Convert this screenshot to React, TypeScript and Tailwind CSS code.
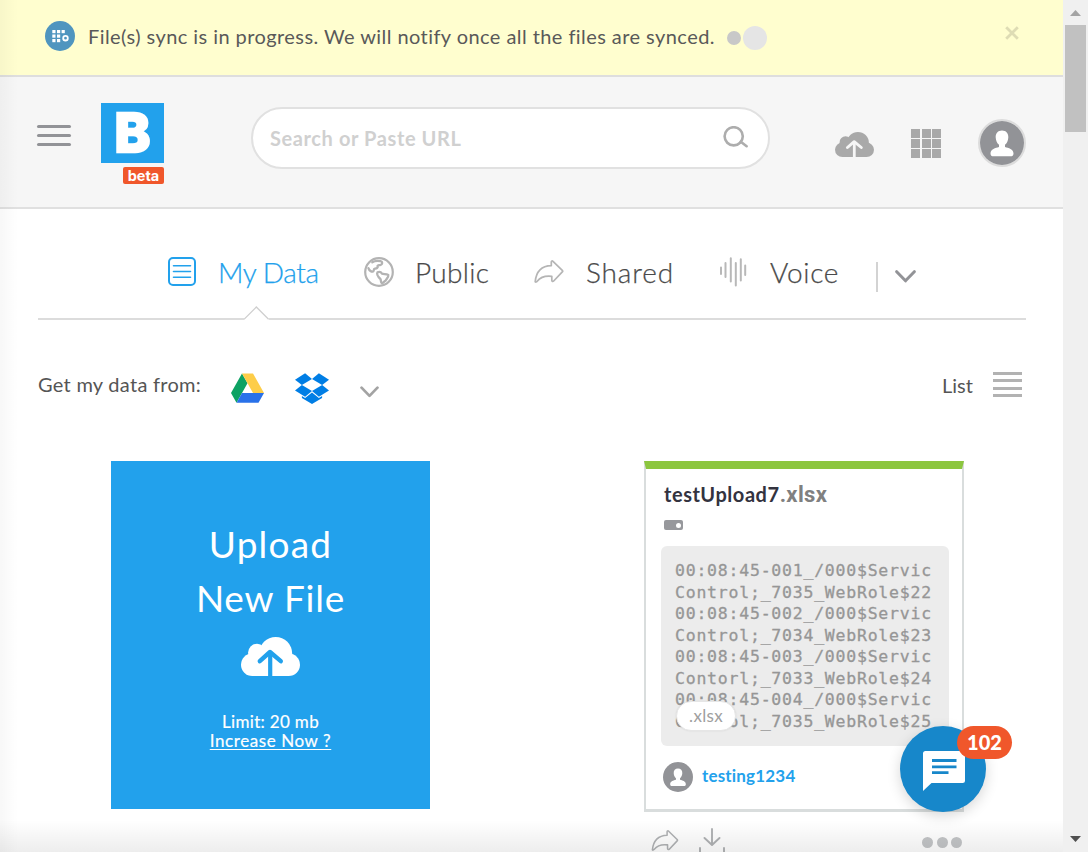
import type { ReactNode } from "react";

const previewLines = [
  "00:08:45-001_/000$Servic",
  "Control;_7035_WebRole$22",
  "00:08:45-002_/000$Servic",
  "Control;_7034_WebRole$23",
  "00:08:45-003_/000$Servic",
  "Contorl;_7033_WebRole$24",
  "00:08:45-004_/000$Servic",
  "Control;_7035_WebRole$25",
];

function CloudUpload({ className, arrow }: { className: string; arrow: string }) {
  return (
    <svg viewBox="0 0 59 39" preserveAspectRatio="none" className={className} fill="currentColor">
      <circle cx="34.7" cy="16.5" r="16.5" />
      <circle cx="16" cy="15.8" r="9" />
      <circle cx="11.3" cy="27.7" r="11.3" />
      <circle cx="47.7" cy="27.7" r="11.3" />
      <rect x="11" y="16" width="37" height="23" />
      <path d="M18.8 24.2 L29 15 L39.8 24.2" fill="none" stroke={arrow} strokeWidth="4.4" strokeLinecap="round" strokeLinejoin="round" />
      <path d="M29.2 15.5 V39" fill="none" stroke={arrow} strokeWidth="4.2" />
    </svg>
  );
}

function Person({ className }: { className: string }) {
  return (
    <svg viewBox="0 0 44 44" className={className}>
      <circle cx="22" cy="22" r="22" fill="#929397" />
      <path
        d="M22 9.5c-4 0-6.6 2.8-6.3 7 .2 3 1.3 5.7 3.3 7.300v2.2c-3.5 1-8.5 2.200-8.500 6.500 0 2 1.200 2.800 3 2.800h17c1.800 0 3-.8 3-2.800 0-4.300-5-5.500-8.500-6.500v-2.200c2-1.600 3.100-4.300 3.300-7.300.3-4.200-2.300-7-6.300-7z"
        fill="#fff"
      />
    </svg>
  );
}

function ShareArrow({ className }: { className: string }) {
  return (
    <svg viewBox="0 0 30 23" className={className} fill="none" stroke="currentColor" strokeWidth="1.700" strokeLinejoin="round">
      <path d="M1.200 21.700C2.200 11.500 8 6 17.300 5.700V1.900c0-1 .9-1.300 1.700-.6l9.300 9.100c.5.500.5 1 0 1.500L19.700 21c-.8.800-1.900.5-1.900-.7v-4C11 15.500 6.500 17 3.200 21.200c-.6.700-1.900 1.200-2 .5z" />
    </svg>
  );
}

function Chevron({ className }: { className: string }) {
  return (
    <svg viewBox="0 0 21 13" className={className} fill="none" stroke="currentColor" strokeWidth="3" strokeLinecap="round" strokeLinejoin="round">
      <path d="M1.700 1.700 L10.500 10.800 L19.300 1.700" />
    </svg>
  );
}

function Tab({ icon, children, className }: { icon: ReactNode; children: ReactNode; className: string }) {
  return (
    <div className={`flex h-[30px] items-start text-[28px] font-light [-webkit-text-stroke:0.25px_currentColor] ${className}`}>
      {icon}
      <span className="block leading-[30px] whitespace-nowrap">{children}</span>
    </div>
  );
}

function Banner() {
  return (
    <div className="flex h-[77px] items-start border-b-2 border-[#dedede] bg-[#fffecf] pl-[45px]">
      <svg viewBox="0 0 30 30" className="mt-[21px] h-[30px] w-[30px] shrink-0">
        <circle cx="15" cy="15" r="15" fill="#4f95bf" />
        <g fill="#fff">
          <rect x="7.300" y="9" width="3.200" height="3.200" />
          <rect x="12" y="9" width="3.200" height="3.200" />
          <rect x="16.600" y="9" width="3.200" height="3.200" />
          <rect x="7.300" y="13.500" width="3.200" height="3.200" />
          <rect x="12" y="13.500" width="3.200" height="3.200" />
          <rect x="7.300" y="18" width="3.200" height="3.200" />
          <rect x="12" y="18" width="3.200" height="3.200" />
        </g>
        <circle cx="20.500" cy="17.200" r="2.300" fill="none" stroke="#fff" strokeWidth="1.800" />
      </svg>
      <p className="mt-[21px] ml-[13px] w-[638px] shrink-0 text-[20px] leading-[30px] tracking-[0.435px] whitespace-nowrap text-[#595959]">
        File(s) sync is in progress. We will notify once all the files are synced.
      </p>
      <div className="mt-[26px] ml-px flex items-center">
        <span className="block size-[14px] rounded-full bg-[#c8c8c8]" />
        <span className="ml-[2px] block size-6 rounded-full bg-[#e5e5e5]" />
      </div>
      <svg viewBox="0 0 14 14" className="mt-[26px] ml-[238px] size-[14px] shrink-0" stroke="#dedcb4" strokeWidth="2.800">
        <path d="M1.200 1.200 L12.800 12.800 M12.800 1.200 L1.200 12.800" />
      </svg>
    </div>
  );
}

function Header() {
  return (
    <header className="flex h-[132px] items-start border-b-2 border-[#e0e0e0] bg-[#f6f6f6] pl-[37px]">
      <div className="mt-12 flex w-[34px] shrink-0 flex-col gap-[6px]">
        <span className="h-[3px] rounded-full bg-[#929397]" />
        <span className="h-[3px] rounded-full bg-[#929397]" />
        <span className="h-[3px] rounded-full bg-[#929397]" />
      </div>
      <div className="mt-[26px] ml-[30px] flex w-[63px] shrink-0 flex-col items-end">
        <div className="flex h-[60px] w-[63px] items-center justify-center bg-[#22a1ec] font-['Inter',sans-serif] text-[54px] leading-[60px] font-extrabold text-white [-webkit-text-stroke:2.500px_#fff]">
          B
        </div>
        <div className="mt-1 flex h-[17px] w-[41px] items-center justify-center rounded-[2px] bg-[#f0572b] font-['Inter',sans-serif] text-[14.500px] leading-[17px] font-bold text-white">
          beta
        </div>
      </div>
      <div className="mt-[30px] ml-[87px] flex h-[62px] w-[519px] shrink-0 items-center rounded-full border-2 border-[#e1e1e1] bg-white pl-[17px]">
        <span className="-mt-px w-[453px] text-[20px] leading-6 font-bold tracking-[0.600px] text-[#d0d0d0]">Search or Paste URL</span>
        <svg viewBox="0 0 25 22" className="-mt-[2px] h-[22px] w-[25px]" fill="none" stroke="#adadad" strokeWidth="2.600" strokeLinecap="round">
          <circle cx="10.700" cy="10.300" r="9.100" />
          <path d="M17.800 15.700 L23.600 20.200" />
        </svg>
      </div>
      <CloudUpload className="mt-[55px] ml-[65px] h-[25px] w-[39px] shrink-0 text-[#a9a9a9]" arrow="#f6f6f6" />
      <div className="mt-[52px] ml-[37px] grid h-[29px] w-[30px] shrink-0 grid-cols-3 gap-[1.500px]">
        {Array.from({ length: 9 }, (_, i) => (
          <span key={i} className="bg-[#a9a9a9]" />
        ))}
      </div>
      <div className="mt-[42px] ml-[37px] size-12 shrink-0 rounded-full border-2 border-[#dcdcdc]">
        <Person className="size-11" />
      </div>
    </header>
  );
}

function Tabs() {
  return (
    <nav className="mx-[38px] w-[988px]">
      <div className="flex h-[97px] items-start pt-12 pl-[130px] text-[#4a4a4a]">
        <Tab
          className="w-[196px] tracking-[-0.420px] text-[#22a1ec]"
          icon={
            <svg viewBox="0 0 28 29" className="mr-[22px] h-[29px] w-[28px]" fill="none" stroke="#22a1ec" strokeLinecap="round">
              <rect x="1" y="1" width="26" height="27" rx="4" strokeWidth="2" />
              <path d="M5.500 8.800H22.500M5.500 14.500H22.500M5.500 20.300H22.500" strokeWidth="1.600" />
            </svg>
          }
        >
          My Data
        </Tab>
        <Tab
          className="w-[170px] tracking-[0.300px]"
          icon={
            <svg viewBox="0 0 30 30" className="mr-[21px] size-[30px]" fill="none" stroke="#b3b3b3" strokeLinecap="round" strokeLinejoin="round">
              <circle cx="15" cy="15" r="13.800" strokeWidth="2.200" />
              <path d="M8.300 5.300C10 4.200 13 3.600 16.500 4.200c2.300.5 2.200 3 .1 3.700-1.800.5-3.700.3-3 1.800.5 1.200-1 1.600-2.600 2-2 .6-.5 1.600-1.800 2.700-1.500 1-4-.8-4.800-3.300" strokeWidth="2.300" />
              <path d="M13.500 15.300c2-1 3.500-.3 4.500 1.300 1.700.7 4.300.2 6.300 1.300.5 2.300-1.800 4-2.700 5.700-1.600.5-2.400 2.500-3.700 2.800-1.300-.4-.8-2.500-1.300-4.200-1.500-1.500-4.600-4.500-3.100-6.900z" strokeWidth="2.300" />
            </svg>
          }
        >
          Public
        </Tab>
        <Tab className="w-[186px] tracking-[0.900px]" icon={<ShareArrow className="mt-[3px] mr-[22px] h-[23px] w-[30px] text-[#b5b5b5]" />}>
          Shared
        </Tab>
        <Tab
          className="w-[156px] tracking-[0.650px]"
          icon={
            <svg viewBox="0 0 27 30" className="mr-[23px] h-[30px] w-[27px]" stroke="#b8b8b8" strokeWidth="2" strokeLinecap="round">
              <path d="M1 10.500V17M5.500 6V20M10.800 1.200V24.500M15.800 6V28.500M20.800 2.200V23.500M25.200 8.500V18" />
            </svg>
          }
        >
          Voice
        </Tab>
        <span className="mt-[5px] block h-[30px] w-[2px] bg-[#d3d3d3]" />
        <Chevron className="mt-[13px] ml-[17px] h-[13px] w-[21px] text-[#929397]" />
      </div>
      <div className="flex h-[14px] items-end">
        <span className="h-[2px] w-[206px] bg-[#dcdcdc]" />
        <svg viewBox="0 0 25 14" className="h-[14px] w-[25px]" fill="none" stroke="#cfcfcf" strokeWidth="1.300">
          <path d="M0 13.300 L12.300 1 L24.600 13.300" />
        </svg>
        <span className="h-[2px] flex-1 bg-[#dcdcdc]" />
      </div>
    </nav>
  );
}

function Toolbar() {
  return (
    <div className="flex h-[141px] items-start pt-[52px] pl-[38px] text-[20px] leading-[26px] text-[#555555]">
      <span className="-mt-px w-[193px] tracking-[0.280px] whitespace-nowrap">Get my data from:</span>
      <svg viewBox="0 0 33 30" className="mt-px h-[30px] w-[33px]">
        <path d="M11 0.500 L0 20 L5.500 29.700 L16.500 10.200 Z" fill="#0da263" />
        <path d="M11 0.500 H22 L33 20 H22 Z" fill="#fdcd48" />
        <path d="M11 20 H33 L27.500 29.700 H5.500 Z" fill="#2971e9" />
      </svg>
      <svg viewBox="0 0 33 31" className="mt-px ml-[31px] h-[31px] w-[34px]" preserveAspectRatio="none" fill="#007ee5">
        <path d="M9.800 0.300 L16.500 5.900 L6.700 12 L0 6.700 Z" />
        <path d="M23.200 0.300 L16.500 5.900 L26.300 12 L33 6.700 Z" />
        <path d="M0 17.400 L6.700 12 L16.500 18.100 L9.800 23.700 Z" />
        <path d="M33 17.400 L26.300 12 L16.500 18.100 L23.200 23.700 Z" />
        <path d="M16.500 19.400 L23.200 24.900 L26.300 23 V25.100 L16.500 31 L6.700 25.100 V23 L9.800 24.900 Z" />
      </svg>
      <Chevron className="mt-[14px] ml-[31px] h-[12px] w-[19px] text-[#a3a3a3]" />
      <span className="ml-[563px] w-[51px]">List</span>
      <div className="flex w-[29px] flex-col gap-[4.300px]">
        <span className="h-[3px] bg-[#b2b2b2]" />
        <span className="h-[3px] bg-[#b2b2b2]" />
        <span className="h-[3px] bg-[#b2b2b2]" />
        <span className="h-[3px] bg-[#b2b2b2]" />
      </div>
    </div>
  );
}

function UploadCard() {
  return (
    <div className="flex h-[348px] w-[319px] shrink-0 flex-col items-center bg-[#22a1ec] pt-[55px] text-center text-white">
      <p className="text-[37px] leading-[55px] tracking-[1.200px]">Upload</p>
      <p className="-mt-px text-[37px] leading-[55px] tracking-[0.800px]">New File</p>
      <CloudUpload className="mt-[12px] h-[39px] w-[59px]" arrow="#22a1ec" />
      <p className="mt-[36px] text-[17px] leading-[19px] tracking-[0.320px] [-webkit-text-stroke:0.200px_#fff]">Limit: 20 mb</p>
      <p className="text-[17px] leading-[19px] tracking-[0.580px] underline decoration-1 underline-offset-2 [-webkit-text-stroke:0.200px_#fff]">Increase Now ?</p>
    </div>
  );
}

function FileCard() {
  return (
    <div className="w-[320px] shrink-0">
      <div className="h-[351px] border-x-2 border-t-8 border-b-[3px] border-x-[#d9dddd] border-t-[#8cc63f] border-b-[#d9dddd] bg-white px-[15px] pt-[13px]">
        <div className="flex h-[24px] items-baseline pl-[3px] leading-[24px] font-bold">
          <span className="text-[20px] tracking-[0.550px] text-[#33333f]">testUpload7</span>
          <span className="font-['Roboto',sans-serif] text-[22px] tracking-[0.350px] text-[#808080]">.xlsx</span>
        </div>
        <div className="mt-[14px] ml-[3px] flex h-[10px] w-[19px] items-center justify-end rounded-[2px] bg-[#97989c] pr-[2.500px]">
          <span className="size-[5px] rounded-full bg-white" />
        </div>
        <div className="relative mt-4 h-[200px] w-[288px] rounded-[6px] bg-[#ececec] pt-[14px] pl-[14px] font-['DejaVu_Sans_Mono',monospace] text-[16.500px] leading-[21.500px] tracking-[0.770px] text-[#969696] [-webkit-text-stroke:0.300px_#969696]">
          {previewLines.map((line) => (
            <div key={line} className="whitespace-pre">
              {line}
            </div>
          ))}
          <span className="absolute bottom-[15px] left-[15px] flex h-[30px] w-[60px] items-center justify-center rounded-full border border-[#e6e6e6] bg-white font-['Lato',sans-serif] text-[17px] leading-5 tracking-[0.300px] text-[#a0a0a0] shadow-[0_0_2px_rgba(0,0,0,0.1)] [-webkit-text-stroke:0px]">
            .xlsx
          </span>
        </div>
        <div className="mt-4 flex items-center pl-[2px]">
          <Person className="size-[30px]" />
          <span className="-mt-[2px] ml-[9px] text-[17px] leading-5 font-bold tracking-[0.180px] text-[#22a1ec]">testing1234</span>
        </div>
      </div>
      <div className="flex items-start pt-[16px] pl-[7px]">
        <ShareArrow className="mt-[2px] h-[21px] w-[28px] text-[#b0b2b4]" />
        <svg viewBox="0 0 26 30" className="ml-[20px] h-[30px] w-[26px]" fill="none" stroke="#b0b2b4" strokeWidth="1.900" strokeLinecap="round" strokeLinejoin="round">
          <path d="M13 1V16M5.500 10L13 17L20.500 10M1 20V26H25V20" />
        </svg>
        <div className="mt-[9px] ml-[197px] flex gap-[3.500px]">
          <span className="size-[11px] rounded-full bg-[#c3c5c7]" />
          <span className="size-[11px] rounded-full bg-[#c3c5c7]" />
          <span className="size-[11px] rounded-full bg-[#c3c5c7]" />
        </div>
      </div>
    </div>
  );
}

function ChatButton() {
  return (
    <div className="absolute top-[726px] left-[900px] flex size-[86px] rounded-full bg-[#1787ca] pt-[25px] pl-[23px] shadow-[0_4px_14px_rgba(0,0,0,0.16)]">
      <svg viewBox="0 0 42 40" className="h-[40px] w-[42px]">
        <path d="M2.500 0H39.500Q42 0 42 2.500V29.500Q42 32 39.500 32H8.500L0 40V2.500Q0 0 2.500 0Z" fill="#fff" />
        <path d="M9 9.500H33.500M9 15.800H33.500M9 21.700H25.500" stroke="#1787ca" strokeWidth="2.800" />
      </svg>
      <span className="absolute top-0 left-[57px] flex h-[33px] w-[55px] items-center justify-center rounded-full bg-[#f0572b] text-[20px] leading-[33px] font-black text-white">102</span>
    </div>
  );
}

function Scrollbar() {
  return (
    <div className="flex w-[25px] shrink-0 flex-col items-center bg-[#f0f0f0]">
      <svg viewBox="0 0 11 6" className="mt-[10px] h-[6px] w-[11px]" fill="#a3a3a3">
        <path d="M5.500 0L11 6H0Z" />
      </svg>
      <span className="mt-[9px] -ml-px block h-[107px] w-[21px] bg-[#c1c1c1]" />
      <svg viewBox="0 0 11 6" className="mt-auto mb-[10px] h-[6px] w-[11px]" fill="#505050">
        <path d="M5.500 6L11 0H0Z" />
      </svg>
    </div>
  );
}

export default function App() {
  return (
    <div className="relative flex h-[852px] w-[1088px] overflow-hidden bg-white font-['Lato',sans-serif]">
      <div className="relative w-[1063px] shrink-0 overflow-hidden">
        <Banner />
        <Header />
        <Tabs />
        <Toolbar />
        <main className="flex items-start gap-[214px] pl-[111px]">
          <UploadCard />
          <FileCard />
        </main>
        <div className="pointer-events-none absolute inset-y-0 left-0 w-[18px] bg-linear-to-r from-black/[0.03] to-transparent" />
        <div className="pointer-events-none absolute inset-x-0 bottom-0 h-8 bg-linear-to-t from-black/[0.07] to-transparent" />
      </div>
      <Scrollbar />
      <ChatButton />
    </div>
  );
}
